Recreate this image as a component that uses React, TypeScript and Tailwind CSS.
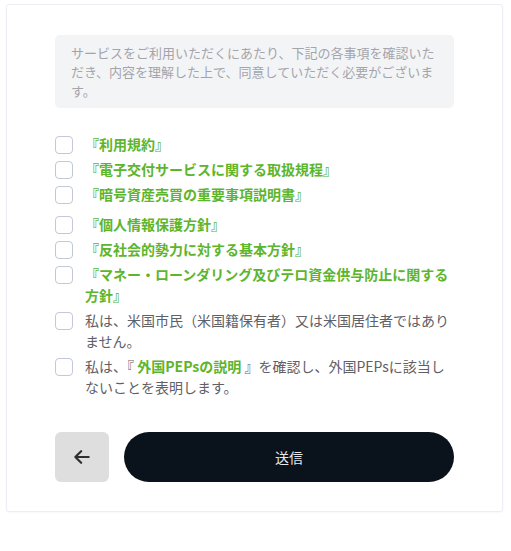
import React from "react";

const font = { fontFamily: '"Noto Sans CJK JP", "Noto Sans", sans-serif' };

function Box() {
  return (
    <span className="mt-[2px] block h-[18px] w-[18px] shrink-0 rounded-[4px] border border-[#c3c7d7] bg-white" />
  );
}

function Row({ children, className = "" }: { children: React.ReactNode; className?: string }) {
  return (
    <label className={"flex items-start gap-[12px] " + className}>
      <Box />
      <span className="text-[14px] leading-[21px] text-[#606066]">{children}</span>
    </label>
  );
}

function Link({ children }: { children: React.ReactNode }) {
  return <span className="font-bold text-[#5db52c]">{children}</span>;
}

export default function App() {
  return (
    <div className="min-h-[551px] bg-white pl-[6px] pr-[8px] pt-[4px]" style={font}>
      <div className="w-[497px] rounded-[3px] border border-[#eceef4] bg-white px-[48px] pb-[29px] pt-[30px] shadow-[0_1px_2px_rgba(0,0,0,0.03)]">
        <div className="rounded-[5px] bg-[#f3f4f6] px-4 py-2 text-[13px] leading-[19px] text-[#a4a5ab]">
          サービスをご利用いただくにあたり、下記の各事項を確認いただき、内容を理解した上で、同意していただく必要がございます。
        </div>

        <div className="mt-[26px] flex flex-col gap-[4px]">
          <Row><Link>『利用規約』</Link></Row>
          <Row><Link>『電子交付サービスに関する取扱規程』</Link></Row>
          <Row><Link>『暗号資産売買の重要事項説明書』</Link></Row>
          <Row className="mt-[5px]"><Link>『個人情報保護方針』</Link></Row>
          <Row><Link>『反社会的勢力に対する基本方針』</Link></Row>
          <Row><Link>『マネー・ローンダリング及びテロ資金供与防止に関する方針』</Link></Row>
          <Row>私は、米国市民（米国籍保有者）又は米国居住者ではありません。</Row>
          <Row>
            私は、『<Link> 外国PEPsの説明 </Link>』を確認し、外国PEPsに該当しないことを表明します。
          </Row>
        </div>

        <div className="mt-[34px] flex items-center gap-[15px]">
          <button className="flex h-[50px] w-[54px] shrink-0 items-center justify-center rounded-[6px] bg-[#dedede]">
            <svg width="20" height="20" viewBox="0 0 24 24" fill="none" stroke="#2f2f2f" strokeWidth="2.6" strokeLinecap="round" strokeLinejoin="round">
              <path d="M20 12H5" />
              <path d="M11 5l-7 7 7 7" />
            </svg>
          </button>
          <button className="flex h-[50px] flex-1 items-center justify-center rounded-full bg-[#0a121b] text-[14px] text-[#e8e9ec]">
            送信
          </button>
        </div>
      </div>
    </div>
  );
}
